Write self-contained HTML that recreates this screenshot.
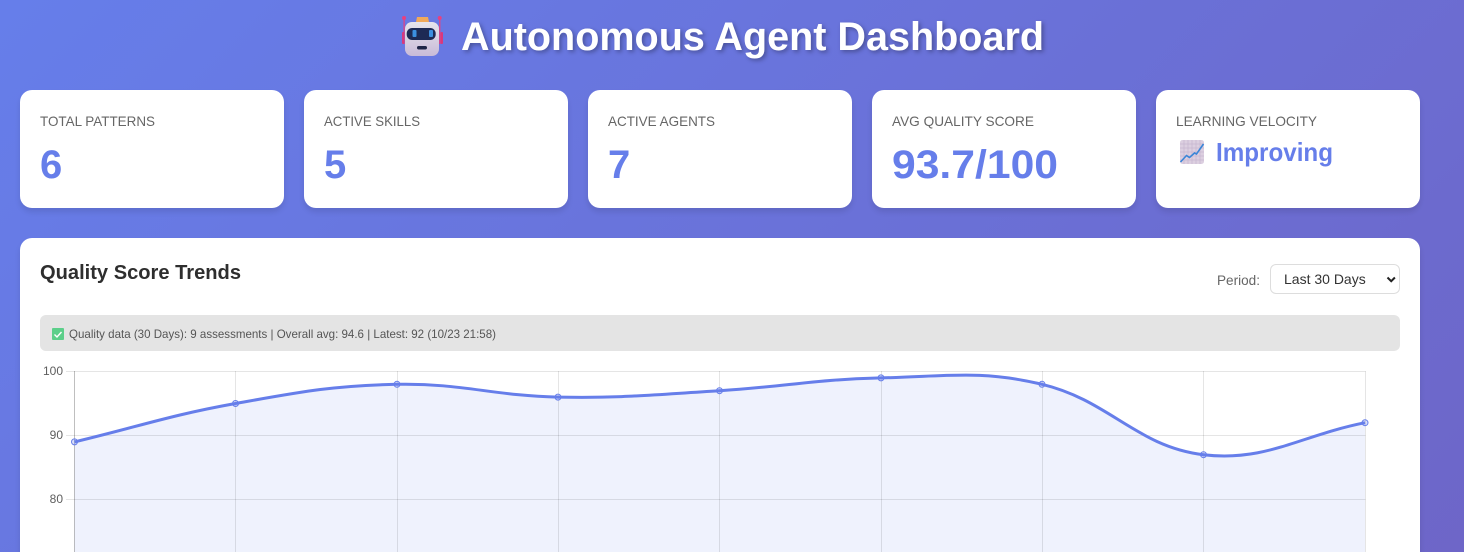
<!DOCTYPE html>
<html lang="en">
<head>
<meta charset="utf-8">
<title>Autonomous Agent Dashboard</title>
<style>
*{box-sizing:border-box;margin:0;padding:0}
html,body{width:1464px;height:552px;overflow:hidden;background:#667eea}
body{position:relative;font-family:"Liberation Sans",Arial,sans-serif}
.bg{position:absolute;left:0;top:0;width:1464px;height:2800px;background:linear-gradient(135deg,#667eea 0%,#764ba2 100%)}
.card{position:absolute;background:#fff;border-radius:12px;box-shadow:0 4px 6px rgba(0,0,0,.1)}
.info{position:absolute;left:40px;top:315px;width:1360px;height:36px;background:#e4e4e4;border-radius:6px}
select{position:absolute;left:1270px;top:264px;width:130px;height:30px;background:#fff;border:1px solid #ddd;border-radius:6px;padding:0 0 0 13px;font:14px "Liberation Sans",Arial,sans-serif;color:#333;appearance:none;-webkit-appearance:none}
svg.layer{position:absolute;left:0;top:0;pointer-events:none}
text{font-family:"Liberation Sans",Arial,sans-serif}
.lab{font-size:14px;fill:#666}
.val{font-size:40px;font-weight:700;fill:#667eea}
.tick{font-size:12px;fill:#5e5e5e;text-anchor:end}
</style>
</head>
<body>
<div class="bg"></div>
<div class="card" style="left:20px;top:90px;width:264px;height:118px"></div>
<div class="card" style="left:304px;top:90px;width:264px;height:118px"></div>
<div class="card" style="left:588px;top:90px;width:264px;height:118px"></div>
<div class="card" style="left:872px;top:90px;width:264px;height:118px"></div>
<div class="card" style="left:1156px;top:90px;width:264px;height:118px"></div>
<div class="card" style="left:20px;top:238px;width:1400px;height:600px"></div>
<div class="info"></div>
<select><option>Last 30 Days</option></select>

<svg class="layer" width="1464" height="552" viewBox="0 0 1464 552" xmlns="http://www.w3.org/2000/svg">
  <defs>
    <linearGradient id="head" x1="0" y1="0" x2="0" y2="1">
      <stop offset="0" stop-color="#e6e5ec"/>
      <stop offset="1" stop-color="#c9bbd8"/>
    </linearGradient>
  </defs>

  <!-- Select chevron -->
  <path d="M1387.500 277.500l3.700 3.700 3.700-3.700" stroke="#222" stroke-width="2" fill="none"/>

  <!-- Title -->
  <text x="461" y="50" font-size="40" font-weight="700" fill="#fff" textLength="583" lengthAdjust="spacingAndGlyphs" style="filter:drop-shadow(2px 2px 2px rgba(0,0,0,.3))">Autonomous Agent Dashboard</text>

  <!-- Robot emoji -->
  <g>
    <rect x="403.500" y="18" width="1.200" height="26" fill="#e8407f"/>
    <rect x="439.200" y="18" width="1.200" height="26" fill="#e8407f"/>
    <circle cx="404" cy="18" r="2" fill="#e8407f"/>
    <circle cx="439.700" cy="18" r="2" fill="#e8407f"/>
    <rect x="402" y="32" width="2.500" height="12" rx="1" fill="#d9387c"/>
    <rect x="440.500" y="32" width="2.500" height="12" rx="1" fill="#d9387c"/>
    <path d="M416 22l1-5h11l1 5z" fill="#f0a95a"/>
    <rect x="405" y="22" width="34" height="34" rx="7" fill="url(#head)"/>
    <rect x="406.700" y="28" width="29" height="12" rx="5.500" fill="#1d2a55"/>
    <rect x="412.500" y="30" width="4" height="7" rx="1" fill="#3b8fe0"/>
    <rect x="429" y="30" width="4" height="7" rx="1" fill="#3b8fe0"/>
    <rect x="417" y="46" width="10" height="3.500" rx="1.700" fill="#1f2547"/>
  </g>

  <!-- Stat labels -->
  <text class="lab" x="40" y="126" textLength="115" lengthAdjust="spacingAndGlyphs">TOTAL PATTERNS</text>
  <text class="lab" x="324" y="126" textLength="96" lengthAdjust="spacingAndGlyphs">ACTIVE SKILLS</text>
  <text class="lab" x="608" y="126" textLength="107" lengthAdjust="spacingAndGlyphs">ACTIVE AGENTS</text>
  <text class="lab" x="892" y="126" textLength="142" lengthAdjust="spacingAndGlyphs">AVG QUALITY SCORE</text>
  <text class="lab" x="1176" y="126" textLength="141" lengthAdjust="spacingAndGlyphs">LEARNING VELOCITY</text>

  <!-- Stat values -->
  <text class="val" x="40" y="178">6</text>
  <text class="val" x="324" y="178">5</text>
  <text class="val" x="608" y="178">7</text>
  <text class="val" x="892" y="178" textLength="166" lengthAdjust="spacingAndGlyphs">93.7/100</text>

  <!-- Chart emoji -->
  <g>
    <rect x="1180" y="140" width="24" height="24" rx="2.500" fill="#dccfe0"/>
    <path d="M1184 140v24M1188 140v24M1192 140v24M1196 140v24M1200 140v24M1180 144h24M1180 148h24M1180 152h24M1180 156h24M1180 160h24" stroke="#c6b6cf" stroke-width=".7" fill="none"/>
    <path d="M1180.500 162l6-6.500 3 2 5-4.500 2 1 7-10" stroke="#3a86d8" stroke-width="1.600" fill="none"/>
  </g>
  <text x="1216" y="161" font-size="26" font-weight="700" fill="#667eea" textLength="117" lengthAdjust="spacingAndGlyphs">Improving</text>

  <!-- Section heading -->
  <text x="40" y="279" font-size="20" font-weight="700" fill="#2e2e2e" textLength="201" lengthAdjust="spacingAndGlyphs">Quality Score Trends</text>
  <text x="1217" y="285" font-size="14" fill="#666" textLength="43" lengthAdjust="spacingAndGlyphs">Period:</text>

  <!-- Info bar -->
  <rect x="52" y="328" width="12" height="12" rx="1" fill="#5ccf8a"/>
  <path d="M54.500 334.500l2.500 2.500 4.500-5" stroke="#fff" stroke-width="1.400" fill="none"/>
  <text x="69" y="338" font-size="12" fill="#555" textLength="427" lengthAdjust="spacingAndGlyphs">Quality data (30 Days): 9 assessments | Overall avg: 94.6 | Latest: 92 (10/23 21:58)</text>

  <!-- Chart area fill -->
  <path d="M74.500 441.900C138.900 426.500 170.500 415.100 235.500 403.500C299.500 392.100 332.200 385.600 397 384.300C461.200 383 493.500 395.800 558 397.100C622.500 398.400 655 394.500 719.500 390.700C784.200 386.800 816.300 379.200 881 377.900C945.300 376.600 980.400 369.600 1042 384.300C1109.300 400.300 1136.700 446.800 1203.500 454.700C1265.900 462.100 1300.400 435.500 1365 422.700V552H74.500Z" fill="rgba(102,126,234,.1)"/>

  <!-- Grid -->
  <g stroke="rgba(0,0,0,.1)" stroke-width="1" fill="none">
    <path d="M66 371.500H1365.500M66 435.500H1365.500M66 499.500H1365.500"/>
    <path d="M235.500 371V552M397.500 371V552M558.500 371V552M719.500 371V552M881.500 371V552M1042.500 371V552M1203.500 371V552M1365.500 371V552"/>
  </g>
  <path d="M74.500 371V552" stroke="rgba(0,0,0,.25)" fill="none"/>

  <!-- Ticks -->
  <text class="tick" x="63" y="375">100</text>
  <text class="tick" x="63" y="439">90</text>
  <text class="tick" x="63" y="503">80</text>

  <!-- Line -->
  <path d="M74.500 441.900C138.900 426.500 170.500 415.100 235.500 403.500C299.500 392.100 332.200 385.600 397 384.300C461.200 383 493.500 395.800 558 397.100C622.500 398.400 655 394.500 719.500 390.700C784.200 386.800 816.300 379.200 881 377.900C945.300 376.600 980.400 369.600 1042 384.300C1109.300 400.300 1136.700 446.800 1203.500 454.700C1265.900 462.100 1300.400 435.500 1365 422.700" stroke="#667eea" stroke-width="3" fill="none"/>

  <!-- Points -->
  <g fill="rgba(102,126,234,.25)" stroke="#667eea" stroke-width="1">
    <circle cx="74.500" cy="441.900" r="3"/>
    <circle cx="235.500" cy="403.500" r="3"/>
    <circle cx="397" cy="384.300" r="3"/>
    <circle cx="558" cy="397.100" r="3"/>
    <circle cx="719.500" cy="390.700" r="3"/>
    <circle cx="881" cy="377.900" r="3"/>
    <circle cx="1042" cy="384.300" r="3"/>
    <circle cx="1203.500" cy="454.700" r="3"/>
    <circle cx="1365" cy="422.700" r="3"/>
  </g>
</svg>
</body>
</html>
